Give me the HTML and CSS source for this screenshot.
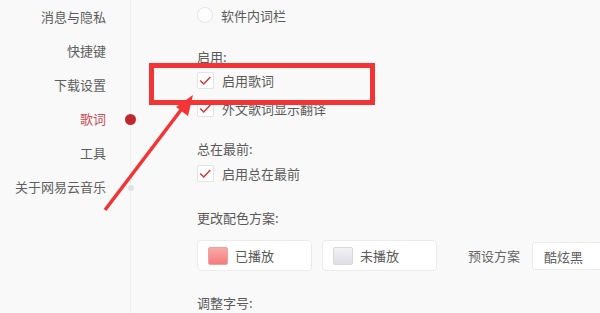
FILE: index.html
```html
<!DOCTYPE html>
<html>
<head>
<meta charset="utf-8">
<link rel="stylesheet" href="styles.css">
</head>
<body>
<div class="page">
  <nav class="sidebar">
    <div class="nav-item">消息与隐私</div>
    <div class="nav-item">快捷键</div>
    <div class="nav-item">下载设置</div>
    <div class="nav-item active">歌词</div>
    <div class="nav-item">工具</div>
    <div class="nav-item">关于网易云音乐</div>
    <span class="dot dot-active"></span>
    <span class="dot dot-idle"></span>
  </nav>
  <main class="content">
    <div class="option radio-row"><span class="radio"></span><span>软件内词栏</span></div>
    <div class="section-title first">启用:</div>
    <div class="option"><span class="check"><svg viewBox="0 0 17 17"><path d="M2.5 8.5 L6.5 12.5 L14 4.5" fill="none" stroke="#d7363c" stroke-width="1.7"/></svg></span><span>启用歌词</span></div>
    <div class="option"><span class="check"><svg viewBox="0 0 17 17"><path d="M2.5 8.5 L6.5 12.5 L14 4.5" fill="none" stroke="#d7363c" stroke-width="1.7"/></svg></span><span>外文歌词显示翻译</span></div>
    <div class="section-title">总在最前:</div>
    <div class="option"><span class="check"><svg viewBox="0 0 17 17"><path d="M2.5 8.5 L6.5 12.5 L14 4.5" fill="none" stroke="#d7363c" stroke-width="1.7"/></svg></span><span>启用总在最前</span></div>
    <div class="section-title wide">更改配色方案:</div>
    <div class="colors">
      <div class="color-btn"><span class="swatch swatch-played"></span><span>已播放</span></div>
      <div class="color-btn"><span class="swatch swatch-unplayed"></span><span>未播放</span></div>
      <span class="preset-label">预设方案</span>
      <div class="select">酷炫黑</div>
    </div>
    <div class="section-title wide last">调整字号:</div>
  </main>
  <svg class="annotation" width="600" height="313" viewBox="0 0 600 313">
    <rect x="151.5" y="65.5" width="221" height="37" fill="none" stroke="#f23434" stroke-width="5"/>
    <line x1="105" y1="210" x2="184" y2="106" stroke="#f23434" stroke-width="3.5"/>
    <polygon points="193,95 188,116 176,107" fill="#f23434"/>
  </svg>
</div>
</body>
</html>
```
FILE: styles.css
```css
* { box-sizing: border-box; }
html, body { margin: 0; padding: 0; }
body {
  background: #f9f9f9;
  font-family: "Noto Sans CJK SC", "Noto Sans", sans-serif;
  font-size: 13px;
  color: #5a5a5a;
}
.page {
  position: relative;
  width: 600px;
  height: 313px;
  overflow: hidden;
  display: flex;
}
.sidebar {
  position: relative;
  width: 131px;
  flex: none;
  border-right: 1px solid #efefef;
  padding-right: 24px;
}
.nav-item {
  height: 34px;
  line-height: 34px;
  text-align: right;
  color: #5e5e5e;
}
.nav-item.active { color: #cc4a50; }
.dot {
  position: absolute;
  border-radius: 50%;
}
.dot-active {
  width: 11px; height: 11px;
  right: -6px; top: 114px;
  background: #c0282e;
}
.dot-idle {
  width: 6px; height: 6px;
  right: -3.5px; top: 185px;
  background: #e2e2e2;
}
.content {
  flex: 1;
  padding-left: 66px;
  display: flex;
  flex-direction: column;
}
.option {
  display: flex;
  align-items: center;
  gap: 8px;
  height: 29px;
}
.radio-row { height: 32px; }
.radio {
  width: 16px; height: 16px;
  border-radius: 50%;
  border: 1px solid #e4e4e4;
  background: #fff;
}
.check {
  width: 17px; height: 17px;
  border: 1px solid #e4e4e4;
  border-radius: 2px;
  background: #fff;
  display: flex;
}
.check svg { width: 15px; height: 15px; }
.section-title {
  height: 20px;
  line-height: 20px;
  margin-top: 16px;
}
.section-title.wide { margin-top: 21px; }
.section-title.last { margin-top: 22px; }
.colors {
  display: flex;
  align-items: center;
  margin-top: 12px;
  height: 31px;
}
.color-btn {
  width: 115px;
  height: 31px;
  background: #fff;
  border: 1px solid #ebebeb;
  border-radius: 4px;
  display: flex;
  align-items: center;
  gap: 7px;
  padding-left: 10px;
  margin-right: 10px;
  flex: none;
}
.swatch {
  width: 20px; height: 18px;
  border-radius: 2px;
}
.swatch-played {
  background: linear-gradient(#f9aaaa, #f47c7c);
  border: 1px solid #f0a0a0;
}
.swatch-unplayed {
  background: linear-gradient(#f2f2f5, #dedee4);
  border: 1px solid #d8d8dc;
}
.preset-label {
  margin-left: 21px;
  margin-right: 12px;
  flex: none;
  color: #666;
}
.select {
  width: 100px;
  height: 28px;
  line-height: 28px;
  background: #fff;
  border: 1px solid #ebebeb;
  border-radius: 3px;
  padding-left: 11px;
  flex: none;
}
.annotation {
  position: absolute;
  left: 0; top: 0;
  pointer-events: none;
}
```
